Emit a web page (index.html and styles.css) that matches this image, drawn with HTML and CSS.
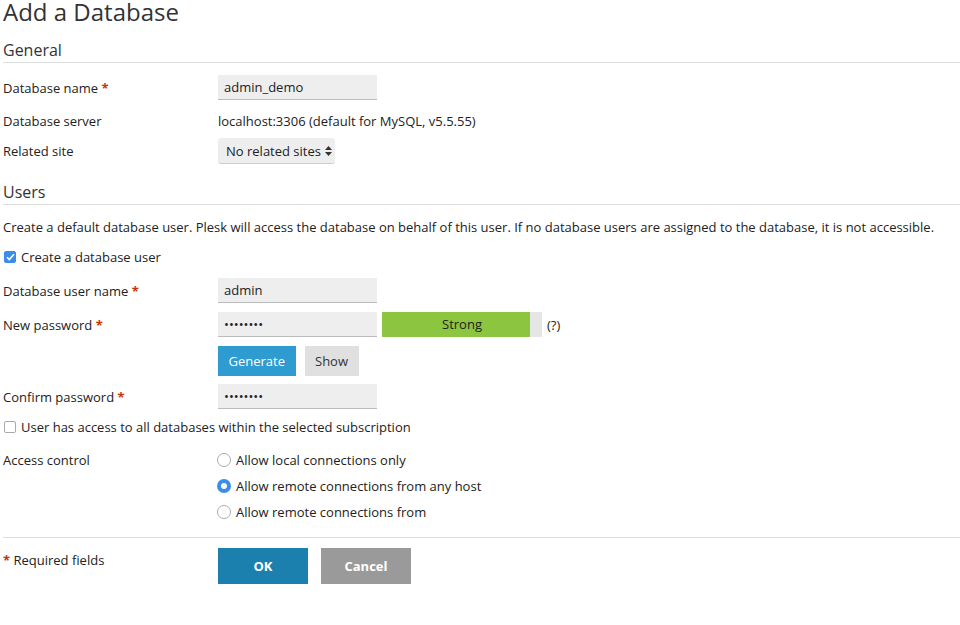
FILE: index.html
```html
<html lang="en">
  <head>
    <meta charset="UTF-8" />
    <title>Add a Database</title>
    <link rel="stylesheet" href="styles.css">
  </head>
  <body>
    <h1 class="page-title">Add a Database</h1>
    <form class="form">
      <div class="section-title section-general">General</div>
      <div class="form-row row-first">
        <label class="label">Database name <span class="req">*</span></label>
        <div class="field"><input class="text-input" type="text" value="admin_demo" /></div>
      </div>
      <div class="form-row row-text">
        <div class="label">Database server</div>
        <div class="field">localhost:3306 (default for MySQL, v5.5.55)</div>
      </div>
      <div class="form-row row-select">
        <div class="label">Related site</div>
        <div class="field">
          <div class="select">No related sites
            <svg class="select-arrows" width="7" height="10" viewBox="0 0 7 10"><path d="M3.5 0L7 4H0z M3.5 10L0 6h7z" fill="#333"/></svg>
          </div>
        </div>
      </div>

      <div class="section-title section-users">Users</div>
      <p class="hint">Create a default database user. Plesk will access the database on behalf of this user. If no database users are assigned to the database, it is not accessible.</p>
      <label class="check-row"><span class="checkbox checked"><svg width="9" height="8" viewBox="0 0 9 8"><path d="M1 4.2l2.3 2.3L8 1.3" fill="none" stroke="#fff" stroke-width="1.6"/></svg></span>Create a database user</label>
      <div class="form-row row-after-check">
        <label class="label">Database user name <span class="req">*</span></label>
        <div class="field"><input class="text-input" type="text" value="admin" /></div>
      </div>
      <div class="form-row">
        <label class="label">New password <span class="req">*</span></label>
        <div class="field">
          <input class="text-input" type="text" value="&bull;&bull;&bull;&bull;&bull;&bull;&bull;&bull;" />
          <div class="strength" style="--level: 148px">Strong</div>
          <span class="help">(?)</span>
        </div>
      </div>
      <div class="form-row">
        <div class="label"></div>
        <div class="field">
          <button type="button" class="btn btn-blue">Generate</button>
          <button type="button" class="btn btn-gray">Show</button>
        </div>
      </div>
      <div class="form-row row-confirm">
        <label class="label">Confirm password <span class="req">*</span></label>
        <div class="field"><input class="text-input" type="text" value="&bull;&bull;&bull;&bull;&bull;&bull;&bull;&bull;" /></div>
      </div>
      <label class="check-row check-access"><span class="checkbox"></span>User has access to all databases within the selected subscription</label>
      <div class="form-row access-row">
        <div class="label">Access control</div>
        <div class="field radios">
          <label class="radio-row"><span class="radio"></span>Allow local connections only</label>
          <label class="radio-row"><span class="radio checked"></span>Allow remote connections from any host</label>
          <label class="radio-row"><span class="radio"></span>Allow remote connections from</label>
        </div>
      </div>

      <div class="form-footer">
        <div class="label"><span class="req">*</span> Required fields</div>
        <div class="field">
          <button type="button" class="btn btn-ok">OK</button>
          <button type="button" class="btn btn-cancel">Cancel</button>
        </div>
      </div>
    </form>
  </body>
</html>
```

FILE: styles.css
```css
body {
  margin: 0;
  padding: 0 0 0 3px;
  font-family: "Open Sans", "Liberation Sans", sans-serif;
  font-size: 13px;
  color: #222;
  background: #fff;
}

.page-title {
  margin: 0;
  font-size: 24px;
  font-weight: normal;
  line-height: 24px;
  color: #333;
}

.section-title {
  margin-top: 16px;
  font-size: 16px;
  line-height: 21px;
  color: #333;
  border-bottom: 1px solid #ddd;
}

.section-general {
  padding-bottom: 1px;
}

.section-users {
  margin-top: 18px;
  padding-bottom: 1px;
}

.form-row {
  display: grid;
  grid-template-columns: 215px auto;
  align-items: center;
  margin-top: 9px;
}

.row-first {
  margin-top: 12px;
}

.row-text {
  margin-top: 12px;
}

.row-select {
  margin-top: 8px;
}

.row-after-check {
  margin-top: 6px;
}

.row-confirm {
  margin-top: 8px;
}

.label {
  line-height: 18px;
}

.req {
  color: #c30;
  font-weight: bold;
}

.field {
  display: flex;
  align-items: center;
  line-height: 18px;
}

.text-input {
  box-sizing: border-box;
  width: 159px;
  height: 25px;
  padding: 0 6px;
  border: none;
  border-bottom: 1px solid #bbb;
  background: #eee;
  font-family: inherit;
  font-size: 13px;
  color: #222;
}

.select {
  display: flex;
  align-items: center;
  gap: 4px;
  height: 25px;
  padding: 0 3px 0 8px;
  background: #eee;
  border-bottom: 1px solid #ccc;
  border-radius: 3px;
}

.hint {
  margin: 13px 0 0;
  line-height: 18px;
}

.check-row {
  display: flex;
  align-items: center;
  gap: 5px;
  height: 30px;
  margin-top: 6px;
}

.check-access {
  margin-top: 3px;
}

.checkbox {
  box-sizing: border-box;
  display: flex;
  align-items: center;
  justify-content: center;
  width: 12px;
  height: 12px;
  margin-left: 1px;
  border: 1px solid #aaa;
  border-radius: 2px;
  background: #fff;
}

.checkbox.checked {
  border-color: #3a8de8;
  background: #3a8de8;
}

.strength {
  width: 160px;
  height: 25px;
  margin-left: 5px;
  line-height: 25px;
  text-align: center;
  background: linear-gradient(to right, #8cc53f var(--level), #e6e6e6 var(--level));
  color: #222;
}

.help {
  margin-left: 5px;
}

.btn {
  height: 30px;
  padding: 0 10.5px;
  border: none;
  font-family: inherit;
  font-size: 13px;
  cursor: pointer;
}

.btn + .btn {
  margin-left: 9px;
}

.btn-blue {
  background: #2e9bd1;
  color: #fff;
}

.btn-gray {
  background: #e0e0e0;
  color: #333;
}

.access-row {
  align-items: start;
  margin-top: 5px;
}

.radios {
  flex-direction: column;
  align-items: flex-start;
}

.radio-row {
  display: flex;
  align-items: center;
  gap: 5px;
  height: 26px;
  margin-left: -1px;
}

.radio {
  box-sizing: border-box;
  width: 14px;
  height: 14px;
  border: 1px solid #aaa;
  border-radius: 50%;
  background: #fff;
}

.radio.checked {
  border: 4px solid #3a8de8;
}

.access-row .label {
  padding-top: 4px;
}

.form-footer {
  display: grid;
  grid-template-columns: 215px auto;
  align-items: start;
  margin-top: 12px;
  padding-top: 10px;
  border-top: 1px solid #ddd;
}

.form-footer .label {
  padding-top: 3px;
}

.btn-ok,
.btn-cancel {
  width: 90px;
  height: 36px;
  font-weight: bold;
  color: #fff;
}

.btn-ok {
  background: #1b80ae;
}

.form-footer .btn-cancel {
  margin-left: 13px;
  background: #9a9a9a;
}
```
